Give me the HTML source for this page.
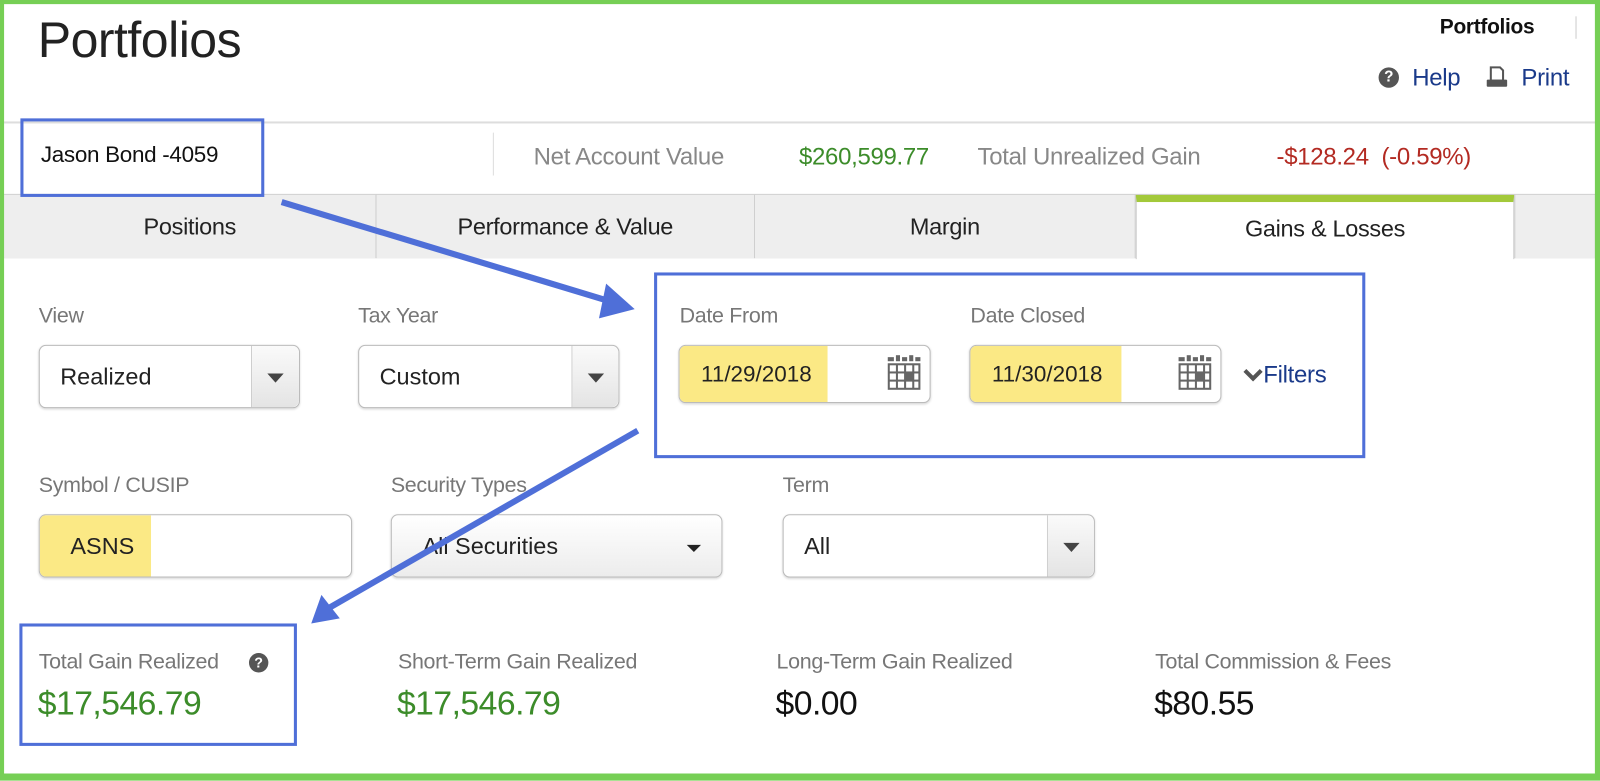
<!DOCTYPE html>
<html><head><meta charset="utf-8"><style>
*{box-sizing:border-box;margin:0;padding:0}
html,body{width:1600px;height:781px;overflow:hidden;background:#fff}
#w{position:absolute;left:0;top:0;width:1568px;height:765px;transform:scale(1.020408);transform-origin:0 0;font-family:"Liberation Sans",sans-serif;background:#fff}
.a{position:absolute;white-space:nowrap}
.lbl{color:#777;font-size:21px;letter-spacing:-0.3px}
.sel{position:absolute;border:1px solid #bbb;border-radius:7px;background:#fff;box-shadow:0 1px 2px rgba(0,0,0,.15);font-size:23px;color:#222}
.arr{position:absolute;top:0;bottom:0;right:0;border-left:1px solid #ccc;background:linear-gradient(#fafafa,#e4e4e4);border-radius:0 7px 7px 0}
.tri{position:absolute;width:0;height:0;border-left:8px solid transparent;border-right:8px solid transparent;border-top:9px solid #444}
.tab{position:absolute;top:191px;height:62px;background:#eee;border-right:1px solid #ccc;font-size:23px;color:#222;text-align:center;line-height:62px;letter-spacing:-0.3px}
.bx{position:absolute;border:3px solid #4f6fd8}
.t23{font-size:23.5px;letter-spacing:-0.3px}
</style></head><body><div id="w">
<div class="a" style="left:37px;top:12px;font-size:49px;color:#222;letter-spacing:-0.5px">Portfolios</div>
<div class="a" style="left:1411px;top:15px;font-size:20.5px;font-weight:bold;color:#111;letter-spacing:-0.3px">Portfolios</div>
<div class="a" style="left:1544px;top:16px;width:1px;height:22px;background:#ccc"></div>
<div class="a" style="left:1351px;top:66px;width:20px;height:20px;border-radius:50%;background:#555;color:#fff;font-size:15px;font-weight:bold;text-align:center;line-height:20px">?</div>
<div class="a t23" style="left:1384px;top:63px;color:#1a3a8a">Help</div>
<svg class="a" style="left:1455px;top:64px" width="24" height="24" viewBox="0 0 24 24"><path d="M6 2h9l3 3v10H6z" fill="none" stroke="#555" stroke-width="2"/><rect x="2" y="14" width="20" height="7" rx="1" fill="#555"/></svg>
<div class="a t23" style="left:1491px;top:63px;color:#1a3a8a">Print</div>
<div class="a" style="left:4px;top:119px;width:1560px;height:2px;background:#ddd"></div>
<div class="a" style="left:40px;top:139px;font-size:22px;color:#111;letter-spacing:-0.3px">Jason Bond -4059</div>
<div class="a" style="left:483px;top:130px;width:1px;height:42px;background:#ddd"></div>
<div class="a t23" style="left:523px;top:140px;color:#888">Net Account Value</div>
<div class="a t23" style="left:783px;top:140px;color:#3c8c2a">$260,599.77</div>
<div class="a t23" style="left:958px;top:140px;color:#888">Total Unrealized Gain</div>
<div class="a t23" style="left:1251px;top:140px;color:#b32a22">-$128.24&nbsp; (-0.59%)</div>
<div class="a" style="left:4px;top:190px;width:1560px;height:1px;background:#ccc"></div>
<div class="a" style="left:4px;top:252px;width:1560px;height:1px;background:#ccc"></div>
<div class="tab" style="left:4px;width:365px">Positions</div>
<div class="tab" style="left:369px;width:371px">Performance &amp; Value</div>
<div class="tab" style="left:740px;width:373px">Margin</div>
<div class="tab" style="left:1113px;width:371px;background:#fff;border-left:1px solid #ccc;height:63px;border-top:7px solid #a3c93a;line-height:52px">Gains &amp; Losses</div>
<div class="tab" style="left:1484px;width:80px;border-left:1px solid #ccc"></div>
<div class="a lbl" style="left:38px;top:298px">View</div>
<div class="a lbl" style="left:351px;top:298px">Tax Year</div>
<div class="a lbl" style="left:666px;top:298px">Date From</div>
<div class="a lbl" style="left:951px;top:298px">Date Closed</div>
<div class="sel" style="left:38px;top:338px;width:256px;height:62px"><span class="a" style="left:20px;top:17px">Realized</span><div class="arr" style="width:47px"><div class="tri" style="left:15px;top:27px"></div></div></div>
<div class="sel" style="left:351px;top:338px;width:256px;height:62px"><span class="a" style="left:20px;top:17px">Custom</span><div class="arr" style="width:46px"><div class="tri" style="left:15px;top:27px"></div></div></div>
<div class="sel" style="left:665px;top:338px;width:247px;height:57px;overflow:hidden;font-size:22px"><div class="a" style="left:0;top:0;width:145px;height:57px;background:#fbe985"></div><span class="a" style="left:21px;top:15px">11/29/2018</span>
<svg class="a" style="left:202px;top:9px" width="35" height="36" viewBox="0 0 35 36"><g fill="#666"><rect x="2" y="2" width="6" height="4"/><rect x="10" y="0" width="4" height="6"/><rect x="16" y="2" width="5" height="4"/><rect x="23" y="0" width="4" height="6"/><rect x="29" y="2" width="5" height="4"/><rect x="2" y="8" width="32" height="26"/></g><g fill="#fff"><rect x="4" y="10" width="6" height="6"/><rect x="12" y="10" width="6" height="6"/><rect x="20" y="10" width="6" height="6"/><rect x="28" y="10" width="4" height="6"/><rect x="4" y="18" width="6" height="6"/><rect x="12" y="18" width="6" height="6"/><rect x="28" y="18" width="4" height="6"/><rect x="4" y="26" width="6" height="6"/><rect x="12" y="26" width="6" height="6"/><rect x="20" y="26" width="6" height="6"/><rect x="28" y="26" width="4" height="6"/></g></svg></div>
<div class="sel" style="left:950px;top:338px;width:247px;height:57px;overflow:hidden;font-size:22px"><div class="a" style="left:0;top:0;width:148px;height:57px;background:#fbe985"></div><span class="a" style="left:21px;top:15px">11/30/2018</span>
<svg class="a" style="left:202px;top:9px" width="35" height="36" viewBox="0 0 35 36"><g fill="#666"><rect x="2" y="2" width="6" height="4"/><rect x="10" y="0" width="4" height="6"/><rect x="16" y="2" width="5" height="4"/><rect x="23" y="0" width="4" height="6"/><rect x="29" y="2" width="5" height="4"/><rect x="2" y="8" width="32" height="26"/></g><g fill="#fff"><rect x="4" y="10" width="6" height="6"/><rect x="12" y="10" width="6" height="6"/><rect x="20" y="10" width="6" height="6"/><rect x="28" y="10" width="4" height="6"/><rect x="4" y="18" width="6" height="6"/><rect x="12" y="18" width="6" height="6"/><rect x="28" y="18" width="4" height="6"/><rect x="4" y="26" width="6" height="6"/><rect x="12" y="26" width="6" height="6"/><rect x="20" y="26" width="6" height="6"/><rect x="28" y="26" width="4" height="6"/></g></svg></div>
<svg class="a" style="left:1218px;top:360px" width="20" height="14" viewBox="0 0 20 14"><path d="M2 3l8 8 8-8" fill="none" stroke="#555" stroke-width="4"/></svg>
<div class="a t23" style="left:1238px;top:354px;color:#1a3a8a">Filters</div>
<div class="a lbl" style="left:38px;top:464px">Symbol / CUSIP</div>
<div class="a lbl" style="left:383px;top:464px">Security Types</div>
<div class="a lbl" style="left:767px;top:464px">Term</div>
<div class="sel" style="left:38px;top:504px;width:307px;height:62px;overflow:hidden"><div class="a" style="left:0;top:0;width:109px;height:62px;background:#fbe985"></div><span class="a" style="left:30px;top:17px">ASNS</span></div>
<div class="sel" style="left:383px;top:504px;width:325px;height:62px;background:linear-gradient(#fff,#ececec)"><span class="a" style="left:30px;top:17px">All Securities</span><div class="tri" style="left:289px;top:29px;border-width:7px 7px 0 7px;border-top-color:#222"></div></div>
<div class="sel" style="left:767px;top:504px;width:306px;height:62px"><span class="a" style="left:20px;top:17px">All</span><div class="arr" style="width:46px"><div class="tri" style="left:15px;top:27px"></div></div></div>
<div class="a lbl" style="left:38px;top:637px">Total Gain Realized</div>
<div class="a" style="left:244px;top:640px;width:19px;height:19px;border-radius:50%;background:#555;color:#fff;font-size:14px;font-weight:bold;text-align:center;line-height:19px">?</div>
<div class="a lbl" style="left:390px;top:637px">Short-Term Gain Realized</div>
<div class="a lbl" style="left:761px;top:637px">Long-Term Gain Realized</div>
<div class="a lbl" style="left:1132px;top:637px">Total Commission &amp; Fees</div>
<div class="a" style="left:37px;top:670px;font-size:33px;color:#3c8c2a;letter-spacing:-0.5px">$17,546.79</div>
<div class="a" style="left:389px;top:670px;font-size:33px;color:#3c8c2a;letter-spacing:-0.5px">$17,546.79</div>
<div class="a" style="left:760px;top:670px;font-size:33px;color:#111;letter-spacing:-0.5px">$0.00</div>
<div class="a" style="left:1131px;top:670px;font-size:33px;color:#111;letter-spacing:-0.5px">$80.55</div>
<div class="bx" style="left:20px;top:116px;width:239px;height:77px"></div>
<div class="bx" style="left:641px;top:267px;width:697px;height:182px"></div>
<div class="bx" style="left:19px;top:611px;width:272px;height:120px"></div>
<svg class="a" style="left:0;top:0" width="1568" height="765"><g stroke="#4f6fd8" stroke-width="6" fill="#4f6fd8"><line x1="276" y1="198" x2="600" y2="296"/><line x1="625" y1="422" x2="322" y2="596"/></g><polygon points="622,303 594,278 587,312" fill="#4f6fd8"/><polygon points="305,611 315,583 333,606" fill="#4f6fd8"/></svg>
<div class="a" style="left:0;top:0;width:1568px;height:765px;border:solid #76cf55;border-width:4px 5px 7px 4px"></div>
</div></body></html>
